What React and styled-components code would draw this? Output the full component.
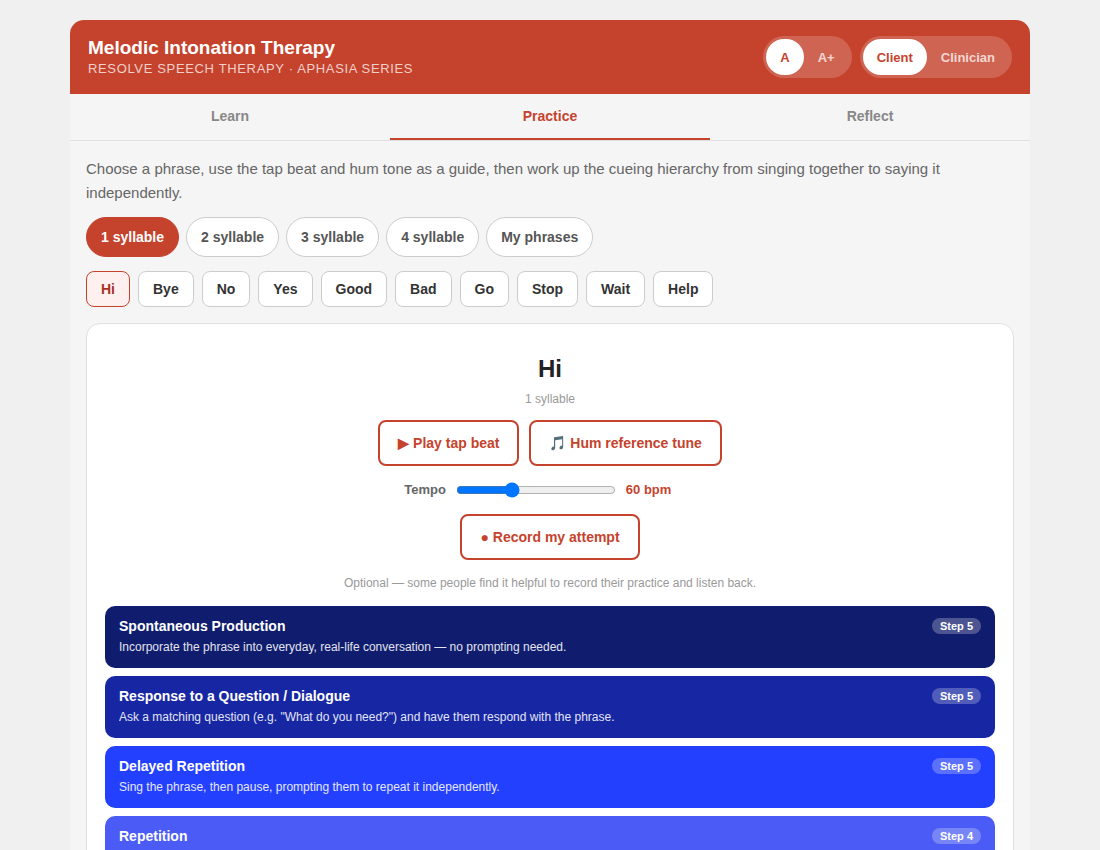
import React, { useState } from 'react';
import styled, { createGlobalStyle } from 'styled-components';

const Global = createGlobalStyle`
	html, body {
		margin: 0;
		background: #f0f0f0;
		font-family: "Liberation Sans", Arial, sans-serif;
	}
`;

const Shell = styled.div`
	max-width: 960px;
	margin: 20px auto;
	background: #f5f5f5;
	border-radius: 14px 14px 0 0;
	overflow: hidden;
`;
const Header = styled.header`
	display: flex;
	justify-content: space-between;
	align-items: center;
	height: 74px;
	padding: 0 18px;
	background: #c5432d;
`;
const HeaderText = styled.div`
	margin-top: -2px;
`;
const Title = styled.h1`
	margin: 0;
	font-size: 19px;
	line-height: 24px;
	font-weight: 700;
	color: #fff;
`;
const Subtitle = styled.div`
	font-size: 13px;
	line-height: 17px;
	letter-spacing: 0.65px;
	color: rgba(255, 255, 255, 0.75);
`;
const Controls = styled.div`
	display: flex;
	gap: 8px;
`;
const Toggle = styled.div`
	display: flex;
	padding: 3px;
	border-radius: 21px;
	background: rgba(255, 255, 255, 0.18);
`;
const ToggleButton = styled.button`
	height: 36px;
	padding: 0 14px;
	border: 0;
	border-radius: 18px;
	font: 700 13px "Liberation Sans", Arial, sans-serif;
	background: ${(p) => (p.$active ? '#fff' : 'transparent')};
	color: ${(p) => (p.$active ? '#c5432d' : 'rgba(255, 255, 255, 0.75)')};
`;
const Tabs = styled.nav`
	display: grid;
	grid-template-columns: repeat(3, 1fr);
	border-bottom: 1px solid #e0e0e0;
`;
const Tab = styled.button`
	height: 46px;
	border: 0;
	border-bottom: 2px solid ${(p) => (p.$active ? '#c5432d' : 'transparent')};
	background: transparent;
	font: 700 14px "Liberation Sans", Arial, sans-serif;
	color: ${(p) => (p.$active ? '#c5432d' : '#888')};
`;
const Content = styled.main`
	padding: 16px;
`;
const Intro = styled.p`
	margin: 0 0 12px;
	font-size: 15px;
	line-height: 24px;
	color: #666;
`;
const PillRow = styled.div`
	display: flex;
	gap: 7px;
	margin-bottom: 14px;
`;
const Pill = styled.button`
	height: 40px;
	padding: 0 14px;
	border: 1px solid ${(p) => (p.$active ? '#c5432d' : '#ccc')};
	border-radius: 20px;
	background: ${(p) => (p.$active ? '#c5432d' : '#fff')};
	color: ${(p) => (p.$active ? '#fff' : '#555')};
	font: 700 14px "Liberation Sans", Arial, sans-serif;
`;
const PhraseRow = styled.div`
	display: flex;
	gap: 8px;
	margin-bottom: 16px;
`;
const Phrase = styled.button`
	height: 36px;
	padding: 0 14px;
	border: 1px solid ${(p) => (p.$active ? '#c5432d' : '#ccc')};
	border-radius: 8px;
	background: ${(p) => (p.$active ? '#fdf0ee' : '#fff')};
	color: ${(p) => (p.$active ? '#a93226' : '#333')};
	font: 700 14px "Liberation Sans", Arial, sans-serif;
`;
const Card = styled.section`
	display: flex;
	flex-direction: column;
	align-items: center;
	padding: 18px;
	background: #fff;
	border: 1px solid #e0e0e0;
	border-radius: 14px;
`;
const Word = styled.h2`
	margin: 12px 0 0;
	font-size: 24px;
	line-height: 30px;
	color: #222;
`;
const Count = styled.div`
	margin-top: 8px;
	font-size: 12px;
	line-height: 14px;
	color: #999;
`;
const ButtonRow = styled.div`
	display: flex;
	gap: 10px;
	margin-top: 14px;
`;
const Outline = styled.button`
	height: 46px;
	padding: 0 18px;
	border: 2px solid #c5432d;
	border-radius: 8px;
	background: #fff;
	color: #c5432d;
	font: 700 14px "Liberation Sans", Arial, sans-serif;
`;
const TempoRow = styled.div`
	display: flex;
	align-items: center;
	gap: 10px;
	height: 16px;
	margin: 15px 0 17px;
	font-size: 13px;
	font-weight: 700;
`;
const TempoLabel = styled.span`
	color: #666;
`;
const TempoValue = styled.span`
	min-width: 70px;
	color: #c5432d;
`;
const Slider = styled.input`
	width: 160px;
	margin: 2px 0 0;
`;
const Note = styled.p`
	margin: 16px 0 16px;
	font-size: 12px;
	line-height: 14px;
	color: #999;
`;
const Steps = styled.div`
	display: flex;
	flex-direction: column;
	gap: 8px;
	align-self: stretch;
`;
const Step = styled.article`
	height: 62px;
	box-sizing: border-box;
	padding: 11px 14px;
	border-radius: 10px;
	background: ${(p) => p.$bg};
	color: #fff;
`;
const StepHead = styled.div`
	display: flex;
	justify-content: space-between;
	align-items: center;
	height: 18px;
	margin-bottom: 3px;
`;
const StepTitle = styled.h3`
	margin: 0;
	font-size: 14px;
	font-weight: 700;
`;
const Badge = styled.span`
	padding: 2px 8px;
	border-radius: 10px;
	background: rgba(255, 255, 255, 0.25);
	font-size: 11px;
	line-height: 12px;
	font-weight: 700;
`;
const StepText = styled.p`
	margin: 0;
	font-size: 12px;
	line-height: 18px;
	opacity: 0.88;
`;

const pills = ['1 syllable', '2 syllable', '3 syllable', '4 syllable', 'My phrases'];
const phrases = ['Hi', 'Bye', 'No', 'Yes', 'Good', 'Bad', 'Go', 'Stop', 'Wait', 'Help'];
const steps = [
	{ title: 'Spontaneous Production', step: 5, bg: '#101d6e', text: 'Incorporate the phrase into everyday, real-life conversation — no prompting needed.' },
	{ title: 'Response to a Question / Dialogue', step: 5, bg: '#1727a3', text: 'Ask a matching question (e.g. "What do you need?") and have them respond with the phrase.' },
	{ title: 'Delayed Repetition', step: 5, bg: '#2440ff', text: 'Sing the phrase, then pause, prompting them to repeat it independently.' },
	{ title: 'Repetition', step: 4, bg: '#4a5cf5', text: 'Sing the phrase, then have them repeat it straight back.' },
];

const App = () => {
	const [tempo, setTempo] = useState(60);
	return (
		<Shell>
			<Global />
			<Header>
				<HeaderText>
					<Title>Melodic Intonation Therapy</Title>
					<Subtitle>RESOLVE SPEECH THERAPY · APHASIA SERIES</Subtitle>
				</HeaderText>
				<Controls>
					<Toggle>
						<ToggleButton $active>A</ToggleButton>
						<ToggleButton>A+</ToggleButton>
					</Toggle>
					<Toggle>
						<ToggleButton $active>Client</ToggleButton>
						<ToggleButton>Clinician</ToggleButton>
					</Toggle>
				</Controls>
			</Header>
			<Tabs>
				<Tab>Learn</Tab>
				<Tab $active>Practice</Tab>
				<Tab>Reflect</Tab>
			</Tabs>
			<Content>
				<Intro>
					Choose a phrase, use the tap beat and hum tone as a guide, then work up the cueing hierarchy from singing together to saying it independently.
				</Intro>
				<PillRow>
					{pills.map((p, i) => (
						<Pill key={p} $active={i === 0}>{p}</Pill>
					))}
				</PillRow>
				<PhraseRow>
					{phrases.map((p, i) => (
						<Phrase key={p} $active={i === 0}>{p}</Phrase>
					))}
				</PhraseRow>
				<Card>
					<Word>Hi</Word>
					<Count>1 syllable</Count>
					<ButtonRow>
						<Outline>▶ Play tap beat</Outline>
						<Outline>🎵 Hum reference tune</Outline>
					</ButtonRow>
					<TempoRow>
						<TempoLabel>Tempo</TempoLabel>
						<Slider type="range" min={40} max={100} value={tempo} onChange={(e) => setTempo(Number(e.target.value))} />
						<TempoValue>{tempo} bpm</TempoValue>
					</TempoRow>
					<Outline>● Record my attempt</Outline>
					<Note>Optional — some people find it helpful to record their practice and listen back.</Note>
					<Steps>
						{steps.map((s) => (
							<Step key={s.title} $bg={s.bg}>
								<StepHead>
									<StepTitle>{s.title}</StepTitle>
									<Badge>Step {s.step}</Badge>
								</StepHead>
								<StepText>{s.text}</StepText>
							</Step>
						))}
					</Steps>
				</Card>
			</Content>
		</Shell>
	);
};

export default App;
